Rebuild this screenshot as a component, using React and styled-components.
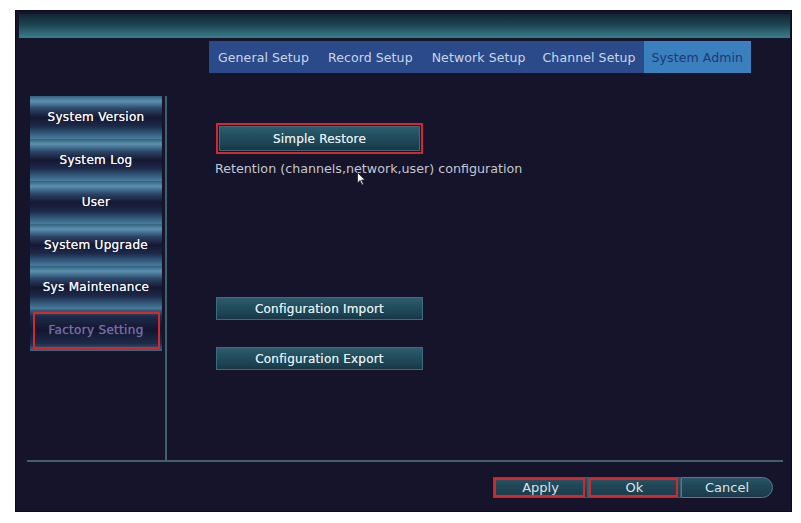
import React from "react";
import styled, { createGlobalStyle, css } from "styled-components";

const GlobalStyle = createGlobalStyle`
  html, body {
    margin: 0;
    padding: 0;
    background: #ffffff;
  }
  body {
    font-family: "DejaVu Sans", Verdana, sans-serif;
  }
`;

const Frame = styled.div`
  position: relative;
  width: 777px;
  height: 502px;
  margin: 10px 0 0 15px;
  background: #15142a;
  box-shadow: inset 0 0 0 1px #0c0b18;
  display: flex;
  flex-direction: column;
  overflow: hidden;
`;

const HeaderBand = styled.div`
  height: 24px;
  margin: 4px 2px 0 4px;
  background: linear-gradient(180deg, #112634 0%, #1d4452 45%, #2f6b78 80%, #3b7d89 100%);
`;

const TabBar = styled.div`
  display: flex;
  align-self: flex-start;
  height: 32px;
  margin: 3px 0 0 194px;
  background: #2a4a8a;
`;

const Tab = styled.div`
  display: flex;
  align-items: center;
  padding: 0 ${({ $pad }) => $pad}px;
  font-size: 12.5px;
  letter-spacing: 0.1px;
  color: #c9d6ea;
  white-space: nowrap;
  ${({ $active }) =>
    $active &&
    css`
      background: #3a7fbe;
      color: #1f3a72;
    `}
`;

const Body = styled.div`
  display: flex;
  height: 364px;
  margin-top: 23px;
`;

const Sidebar = styled.div`
  width: 132px;
  padding: 0 3px 0 15px;
  border-right: 2px solid #3f6272;
  display: flex;
  flex-direction: column;
`;

const SideItem = styled.div`
  position: relative;
  height: 42.5px;
  display: flex;
  align-items: center;
  justify-content: center;
  font-size: 12px;
  letter-spacing: 0.3px;
  color: #f2f4f8;
  text-shadow: 0 0 0.6px #ffffff;
  white-space: nowrap;
  background: linear-gradient(
    180deg,
    #33607e 0%,
    #5a91b0 12%,
    #2c4567 30%,
    #161731 50%,
    #1c2949 70%,
    #386384 90%,
    #4a7c9b 100%
  );
  ${({ $active }) =>
    $active &&
    css`
      color: #6f6da3;
      text-shadow: 0 0 0.8px #6f6da3;
      background: linear-gradient(
        180deg,
        #3b6a86 0%,
        #1d2b48 18%,
        #141530 50%,
        #1d2b48 82%,
        #3b6a86 100%
      );
      &::after {
        content: "";
        position: absolute;
        inset: 3px 2px 2px 3px;
        border: 2px solid #d5282e;
      }
    `}
`;

const Content = styled.div`
  position: relative;
  flex: 1;
  padding: 27px 0 0 49px;
  display: flex;
  flex-direction: column;
  align-items: flex-start;
`;

const Marked = styled.div`
  border: 2px solid #d5282e;
  padding: 1px;
  display: flex;
`;

const ActionButton = styled.div`
  width: ${({ $w }) => $w}px;
  height: ${({ $h }) => $h}px;
  display: flex;
  align-items: center;
  justify-content: center;
  box-sizing: border-box;
  border: 1px solid #3c6c7c;
  background: linear-gradient(180deg, #2d5d6e 0%, #22505f 35%, #1c4352 75%, #173645 100%);
  color: #e4ecf0;
  font-size: 12px;
  letter-spacing: 0.2px;
  text-shadow: 0 0 0.6px #c0d0d8;
  white-space: nowrap;
  margin-top: ${({ $top }) => $top || 0}px;
`;

const Description = styled.div`
  margin: 7px 0 0 -1px;
  font-size: 12.7px;
  color: #c3c8d2;
  white-space: nowrap;
`;

const Cursor = styled.svg`
  position: absolute;
  left: 190px;
  top: 76px;
`;

const Rule = styled.div`
  height: 2px;
  margin: 0 9px 0 12px;
  background: #41606e;
`;

const Footer = styled.div`
  display: flex;
  justify-content: flex-end;
  padding-right: 19px;
  margin-top: 15px;
`;

const FooterButton = styled.div`
  position: relative;
  width: ${({ $w }) => $w}px;
  height: 21px;
  box-sizing: border-box;
  display: flex;
  align-items: center;
  justify-content: center;
  font-size: 13px;
  color: #dbe3ea;
  border: 1px solid #34606f;
  background: linear-gradient(180deg, #2b5566 0%, #214757 40%, #1b3b4a 100%);
  ${({ $round }) =>
    $round &&
    css`
      border-radius: 0 11px 11px 0;
      border-color: #4f7f90;
    `}
  ${({ $marked }) =>
    $marked &&
    css`
      &::after {
        content: "";
        position: absolute;
        inset: 0 2px 0 0;
        border: 2px solid #d5282e;
      }
    `}
`;

const tabs = [
  { label: "General Setup", pad: 9 },
  { label: "Record Setup", pad: 10 },
  { label: "Network Setup", pad: 9 },
  { label: "Channel Setup", pad: 8 },
  { label: "System Admin", pad: 8, active: true },
];

const sideItems = [
  "System Version",
  "System Log",
  "User",
  "System Upgrade",
  "Sys Maintenance",
  "Factory Setting",
];

export default function App() {
  return (
    <>
      <GlobalStyle />
      <Frame>
        <HeaderBand />
        <TabBar>
          {tabs.map((t) => (
            <Tab key={t.label} $pad={t.pad} $active={t.active}>
              {t.label}
            </Tab>
          ))}
        </TabBar>
        <Body>
          <Sidebar>
            {sideItems.map((item) => (
              <SideItem key={item} $active={item === "Factory Setting"}>
                {item}
              </SideItem>
            ))}
          </Sidebar>
          <Content>
            <Marked>
              <ActionButton $w={201} $h={25}>
                Simple Restore
              </ActionButton>
            </Marked>
            <Description>Retention (channels,network,user) configuration</Description>
            <ActionButton $w={207} $h={23} $top={121}>
              Configuration Import
            </ActionButton>
            <ActionButton $w={207} $h={23} $top={27}>
              Configuration Export
            </ActionButton>
            <Cursor width="9" height="14" viewBox="0 0 9 14">
              <path d="M0.5 0.5 L0.5 11 L3 8.5 L5 13 L6.5 12.3 L4.6 8 L8 8 Z" fill="#f4f4f4" stroke="#202030" strokeWidth="0.8" />
            </Cursor>
          </Content>
        </Body>
        <Rule />
        <Footer>
          <FooterButton $w={95} $marked>
            Apply
          </FooterButton>
          <FooterButton $w={93} $marked>
            Ok
          </FooterButton>
          <FooterButton $w={92} $round>
            Cancel
          </FooterButton>
        </Footer>
      </Frame>
    </>
  );
}
